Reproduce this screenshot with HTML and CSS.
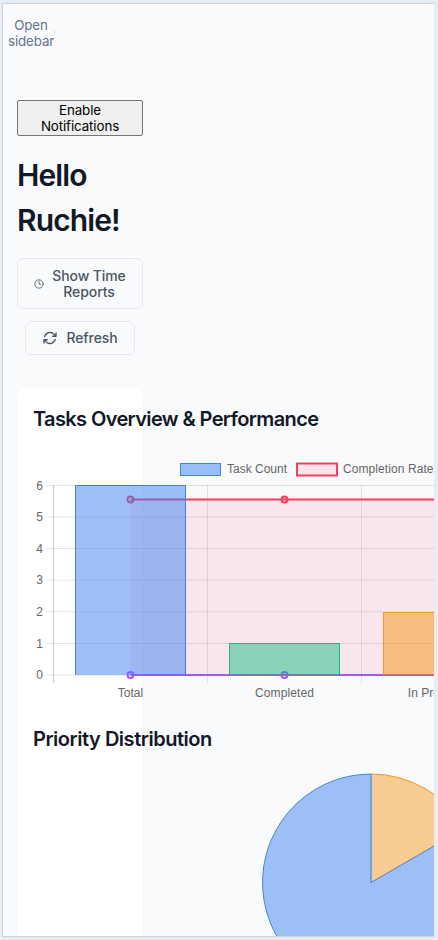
FILE: index.html
```html
<!DOCTYPE html>
<html lang="en">
<head>
<meta charset="utf-8">
<title>Dashboard</title>
<link rel="stylesheet" href="styles.css">
</head>
<body>
<div class="frame">
  <header class="topbar">
    <button class="sidebar-toggle">Open sidebar</button>
    <span class="toggle-dot"></span>
  </header>
  <main class="content">
    <button class="notify">Enable Notifications</button>
    <h1 class="greeting">Hello Ruchie!</h1>
    <div class="actions">
      <button class="action action-reports">
        <svg class="clock" viewBox="0 0 24 24"><circle cx="12" cy="12" r="10"/><path d="M12 6v6l4 2"/></svg>
        <span>Show Time<br>Reports</span>
      </button>
      <button class="action action-refresh">
        <svg class="refresh" viewBox="0 0 24 24"><path d="M16.023 9.348h4.992v-.001M2.985 19.644v-4.992m0 0h4.992m-4.993 0 3.181 3.183a8.25 8.25 0 0 0 13.803-3.7M4.031 9.865a8.25 8.25 0 0 1 13.803-3.7l3.181 3.182m0-4.991v4.99"/></svg>
        <span>Refresh</span>
      </button>
    </div>
    <section class="card">
      <h2 class="card-title tasks-title">Tasks Overview &amp; Performance</h2>
      <svg class="chart" width="440" height="250" viewBox="33 460 440 250">
        <g class="legend">
          <rect class="blue" x="180.5" y="463.5" width="40" height="12"/>
          <text x="227" y="473" textLength="60">Task Count</text>
          <rect class="rate-key" x="297" y="463.5" width="40" height="12"/>
          <text x="343" y="473" textLength="90.5">Completion Rate</text>
        </g>
        <g class="grid">
          <path d="M46 485.5H473M46 517H473M46 548.5H473M46 580.2H473M46 611.8H473M46 643.5H473M46 675H473M207.5 485V683M361.5 485V683"/>
          <path class="axis" d="M53.5 485V683"/>
        </g>
        <g class="ticks">
          <text x="43" y="490">6</text><text x="43" y="521">5</text><text x="43" y="553">4</text>
          <text x="43" y="584">3</text><text x="43" y="616">2</text><text x="43" y="648">1</text><text x="43" y="679">0</text>
        </g>
        <g class="labels">
          <text x="130.5" y="697">Total</text><text x="284.5" y="697" textLength="59">Completed</text><text x="438.5" y="697">In Progress</text>
        </g>
        <path class="purple" d="M130.5 675H473"/>
        <circle class="purple-point" cx="130.5" cy="675" r="3"/><circle class="purple-point" cx="284.5" cy="675" r="3"/>
        <path class="rate-fill" d="M130.5 499.5H473V675H130.5z"/>
        <path class="rate-line" d="M130.5 499.5H473"/>
        <circle class="rate-point" cx="130.5" cy="499.5" r="3"/><circle class="rate-point" cx="284.5" cy="499.5" r="3"/>
        <g class="bars">
          <rect class="blue-fill" x="75" y="485" width="111" height="190"/><path class="blue-edge" d="M75.5 675V485.5H185.5V675"/>
          <rect class="green-fill" x="229" y="643" width="111" height="32"/><path class="green-edge" d="M229.5 675V643.5H339.5V675"/>
          <rect class="amber-fill" x="383" y="612" width="111" height="63"/><path class="amber-edge" d="M383.5 675V612.5H493.5"/>
        </g>
      </svg>
      <h2 class="card-title priority-title">Priority Distribution</h2>
      <svg class="chart pie" width="460" height="230" viewBox="33 768 460 230">
        <path class="pie-amber" d="M371 882.5V774A108.5 108.5 0 0 1 464.96 828.25z"/>
        <path class="pie-blue" d="M371 882.5L464.96 828.25A108.5 108.5 0 1 1 371 774z"/>
      </svg>
    </section>
  </main>
</div>
</body>
</html>
```

FILE: styles.css
```css
* { box-sizing: border-box; }
body {
  margin: 0;
  height: 940px;
  padding: 3px 4px 3px 2px;
  overflow: hidden;
  background: #e7edf4;
  font-family: Inter, sans-serif;
}
button { font-family: inherit; margin: 0; }
.frame {
  height: 934px;
  overflow: hidden;
  background: #f9fafc;
  border: 1px solid #cfd2d9;
  border-right: 0;
}
.topbar { display: flex; height: 64px; padding: 13px 0 0 5px; }
.sidebar-toggle {
  width: 46px;
  height: 32px;
  padding: 0;
  border: 0;
  background: none;
  color: #64748b;
  font-size: 13.33px;
  line-height: 16px;
  letter-spacing: -.1px;
}
.toggle-dot { width: 2px; height: 2px; margin-top: 14px; background: #e2e5e9; }
.content { width: 140px; padding: 32px 0 0 14px; }
.notify {
  display: block;
  width: 126px;
  height: 36px;
  padding: 1px 6px;
  border: 1px solid #767676;
  border-radius: 2px;
  background: #efefef;
  color: #000;
  font-size: 13.33px;
  line-height: 16px;
  letter-spacing: -.1px;
}
.greeting {
  width: 126px;
  margin: 17px 0 15px;
  color: #111827;
  font-size: 30px;
  font-weight: 600;
  line-height: 45px;
  letter-spacing: -.9px;
}
.actions { display: flex; flex-direction: column; align-items: center; gap: 12px; }
.action {
  display: flex;
  align-items: center;
  justify-content: center;
  border: 1px solid #e5e7eb;
  border-radius: 6px;
  background: #f9fafc;
  color: #4b5563;
  font-size: 14px;
  font-weight: 500;
  line-height: 16px;
  letter-spacing: -.1px;
}
.action svg { flex: none; fill: none; stroke: currentColor; stroke-linecap: round; stroke-linejoin: round; }
.action-reports { width: 126px; height: 51px; padding: 0 16px; gap: 8px; white-space: nowrap; }
.action-refresh { width: 110px; height: 34px; padding: 0; gap: 8px; }
.clock { width: 10px; height: 10px; stroke-width: 2; }
.refresh { width: 16px; height: 16px; stroke-width: 2; }
.card {
  width: 126px;
  height: 600px;
  margin-top: 33px;
  padding: 16px;
  border-radius: 8px;
  background: #fff;
  box-shadow: 0 1px 2px rgba(0, 0, 0, .05);
}
.card-title {
  margin: 0;
  color: #111827;
  font-size: 20px;
  font-weight: 600;
  line-height: 30px;
  letter-spacing: -.62px;
  white-space: nowrap;
}
.tasks-title { margin-bottom: 26px; }
.priority-title { letter-spacing: -.47px; }
.chart { display: block; margin-bottom: 14px; }
.pie { margin-top: 14px; }
.chart text { fill: #666; font: 12px "Liberation Sans", sans-serif; }
.ticks text { text-anchor: end; }
.labels text { text-anchor: middle; }
.grid path { fill: none; stroke: rgba(0, 0, 0, .1); }
.grid .axis { stroke: rgba(0, 0, 0, .2); }
.blue, .blue-fill { fill: rgba(59, 130, 246, .5); }
.blue, .blue-edge { stroke: #3b82f6; }
.blue-edge, .green-edge, .amber-edge { fill: none; }
.blue-edge { stroke: #4280df; }
.blue-fill, .green-fill, .amber-fill { stroke: none; }
.green-fill { fill: rgba(16, 185, 129, .48); }
.green-edge { stroke: #25b281; }
.amber-fill { fill: rgba(245, 148, 18, .5); }
.amber-edge { stroke: #f29b25; }
.rate-key { fill: rgba(244, 63, 94, .1); stroke: #f43f5e; stroke-width: 2; }
.rate-fill { fill: rgba(244, 63, 94, .1); }
.rate-line { fill: none; stroke: #f43f5e; stroke-width: 2; }
.rate-point { fill: rgba(244, 63, 94, .1); stroke: #f43f5e; stroke-width: 2; }
.purple { fill: none; stroke: #a855f7; stroke-width: 2; }
.purple-point { fill: rgba(168, 85, 247, .1); stroke: #a855f7; stroke-width: 2; }
.pie-amber { fill: #f6cc92; stroke: #f29b25; }
.pie-blue { fill: #9cbff6; stroke: #4285ee; }
```
